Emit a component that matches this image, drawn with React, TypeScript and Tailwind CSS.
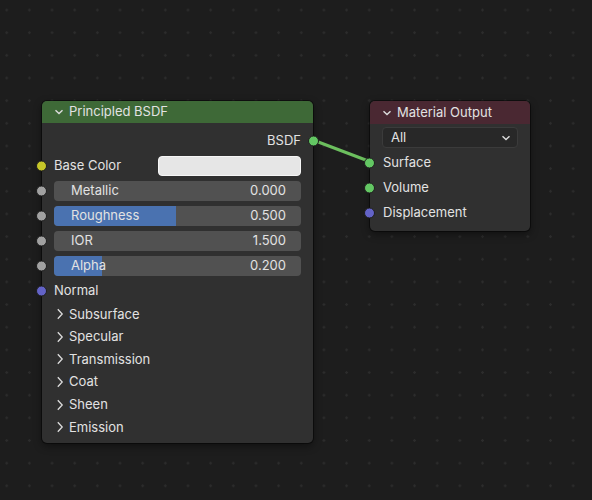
import React from "react";

type SocketColor = "yellow" | "gray" | "purple" | "green";

const socketClass: Record<SocketColor, string> = {
  yellow: "bg-[#c7c729]",
  gray: "bg-[#a1a1a1]",
  purple: "bg-[#6363c7]",
  green: "bg-[#63c763]",
};

function Socket({ color, side }: { color: SocketColor; side: "left" | "right" }) {
  return (
    <span
      className={`absolute top-1/2 h-[11px] w-[11px] -translate-y-1/2 rounded-full border border-[#1e1e1e] ${socketClass[color]} ${
        side === "left" ? "left-[-6px]" : "right-[-6px]"
      }`}
    />
  );
}

function Chevron({ down }: { down?: boolean }) {
  return (
    <svg width="10" height="12" viewBox="0 0 10 12" className="shrink-0">
      {down ? (
        <path d="M1.5 4.2 L5 7.6 L8.5 4.2" fill="none" stroke="#dcdcdc" strokeWidth="1.4" />
      ) : (
        <path d="M2.8 1.2 L7.2 6 L2.8 10.8" fill="none" stroke="#dcdcdc" strokeWidth="1.3" />
      )}
    </svg>
  );
}

function Slider({ label, value, fill }: { label: string; value: string; fill: number }) {
  return (
    <div className="relative flex h-[25px] items-center px-[12px]">
      <Socket color="gray" side="left" />
      <div className="relative flex h-[20px] w-full items-center justify-between overflow-hidden rounded-[4px] bg-[#515151] pl-[17px] pr-[15px]">
        {fill > 0 && (
          <div className="absolute inset-y-0 left-0 bg-[#4a72b0]" style={{ width: `${fill * 100}%` }} />
        )}
        <span className="relative">{label}</span>
        <span className="relative">{value}</span>
      </div>
    </div>
  );
}

function Panel({ label }: { label: string }) {
  return (
    <div className="flex h-[22.6px] items-center gap-[4px] pl-[13px]">
      <Chevron />
      <span>{label}</span>
    </div>
  );
}

export default function App() {
  return (
    <div
      className="relative h-[500px] w-[592px] overflow-hidden bg-[#1d1d1d] bg-[radial-gradient(circle,#2c2c2c_1px,transparent_1.5px)] bg-[size:22.67px_22.67px] bg-[position:-4.6px_-1.3px] text-[13px] text-[#e2e2e2]"
      style={{ fontFamily: "Inter, 'Noto Sans', sans-serif" }}
    >
      <svg className="absolute inset-0" width="592" height="500">
        <line x1="313" y1="140" x2="371" y2="162" stroke="#6cbf5e" strokeWidth="3" strokeLinecap="round" />
      </svg>

      {/* Principled BSDF */}
      <div className="absolute left-[42px] top-[101px] flex h-[342px] w-[271px] flex-col rounded-[5px] bg-[#303030] shadow-[0_0_0_1px_rgba(0,0,0,0.45),0_3px_8px_rgba(0,0,0,0.45)]">
        <div className="flex h-[22px] items-center gap-[5px] rounded-t-[5px] bg-[#3e6937] pl-[12px]">
          <Chevron down />
          <span>Principled BSDF</span>
        </div>
        <div className="flex flex-col pt-[5px]">
          <div className="relative flex h-[25px] items-center justify-end pr-[12px]">
            <span>BSDF</span>
            <Socket color="green" side="right" />
          </div>
          <div className="relative flex h-[25px] items-center justify-between px-[12px]">
            <Socket color="yellow" side="left" />
            <span>Base Color</span>
            <div className="h-[20px] w-[143px] rounded-[4px] border border-[#f6f6f6] bg-[#e6e6e6]" />
          </div>
          <Slider label="Metallic" value="0.000" fill={0} />
          <Slider label="Roughness" value="0.500" fill={0.495} />
          <Slider label="IOR" value="1.500" fill={0} />
          <Slider label="Alpha" value="0.200" fill={0.195} />
          <div className="relative flex h-[25px] items-center px-[12px]">
            <Socket color="purple" side="left" />
            <span>Normal</span>
          </div>
          <Panel label="Subsurface" />
          <Panel label="Specular" />
          <Panel label="Transmission" />
          <Panel label="Coat" />
          <Panel label="Sheen" />
          <Panel label="Emission" />
        </div>
      </div>

      {/* Material Output */}
      <div className="absolute left-[370px] top-[101px] flex h-[130px] w-[160px] flex-col rounded-[5px] bg-[#303030] shadow-[0_0_0_1px_rgba(0,0,0,0.45),0_3px_8px_rgba(0,0,0,0.45)]">
        <div className="flex h-[23px] items-center gap-[5px] rounded-t-[5px] bg-[#4a2832] pl-[12px]">
          <Chevron down />
          <span>Material Output</span>
        </div>
        <div className="flex flex-col pt-[1px]">
          <div className="flex h-[25px] items-center px-[12px]">
            <div className="flex h-[21px] w-full items-center justify-between rounded-[4px] border border-[#3b3b3b] bg-[#282828] pl-[8px] pr-[6px]">
              <span>All</span>
              <Chevron down />
            </div>
          </div>
          <div className="relative flex h-[25px] items-center pl-[13px]">
            <Socket color="green" side="left" />
            <span>Surface</span>
          </div>
          <div className="relative flex h-[25px] items-center pl-[13px]">
            <Socket color="green" side="left" />
            <span>Volume</span>
          </div>
          <div className="relative flex h-[25px] items-center pl-[13px]">
            <Socket color="purple" side="left" />
            <span>Displacement</span>
          </div>
        </div>
      </div>
    </div>
  );
}
